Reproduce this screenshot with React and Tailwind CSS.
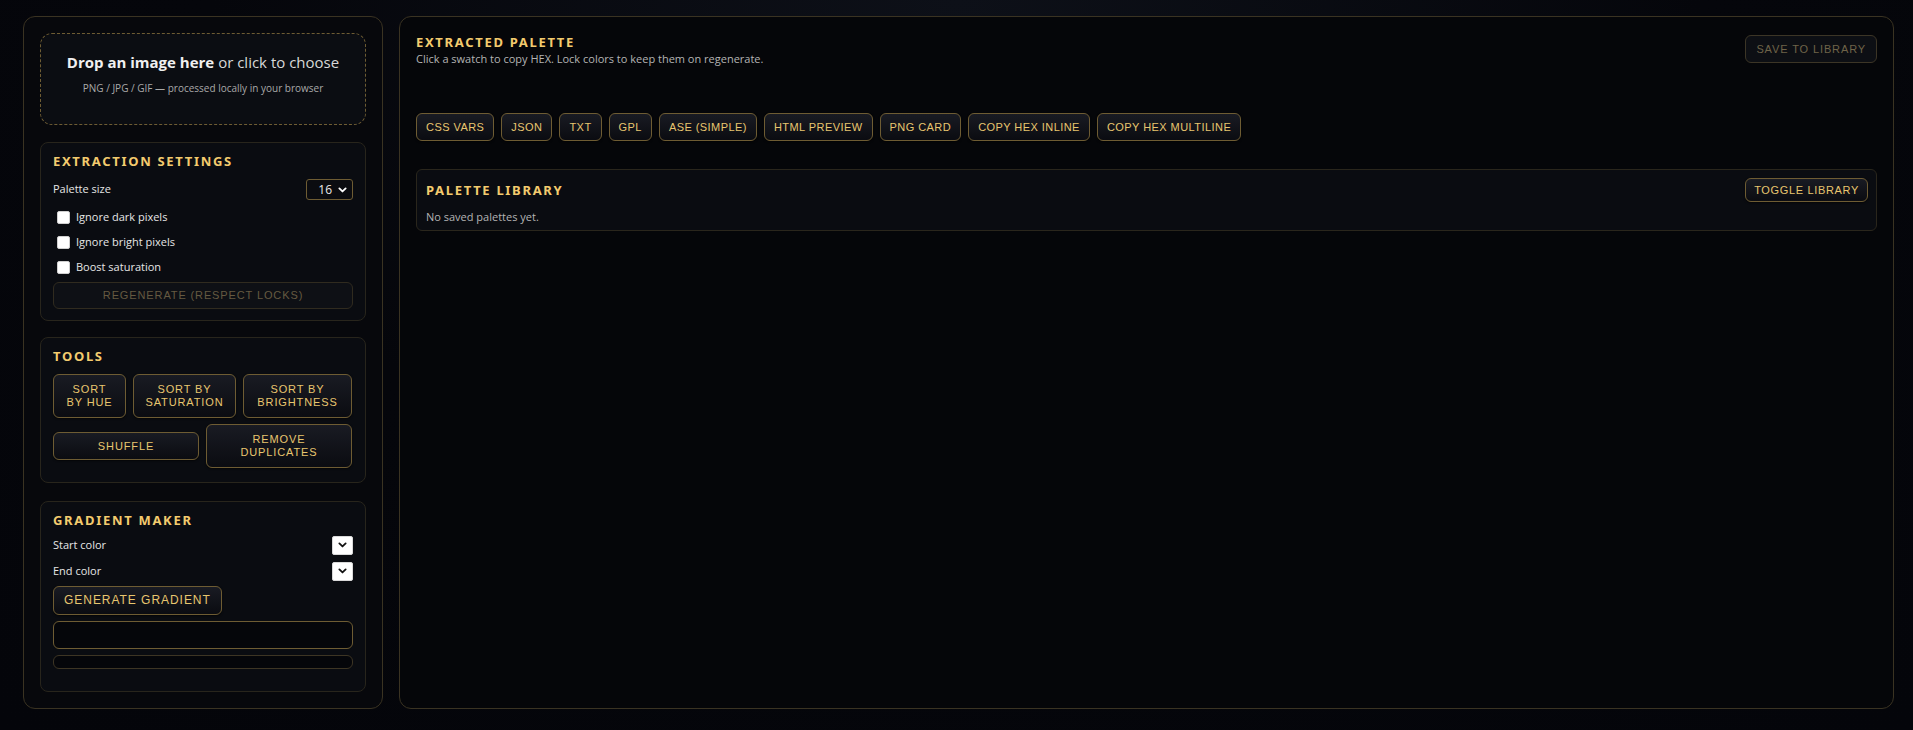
import React from 'react';

const btn =
  "rounded-md border border-[#6e5c33] bg-gradient-to-b from-[#191b23] to-[#0b0c11] text-[#e8c66f] font-['Liberation_Sans',Arial,sans-serif] text-[11px] uppercase leading-[13px] shadow-[0_1px_2px_rgba(0,0,0,0.6)]";

const Chevron = ({ className }) => (
  <svg viewBox="0 0 10 6" className={className} fill="none" stroke="currentColor" strokeWidth="2" strokeLinecap="round" strokeLinejoin="round">
    <path d="M1.5 1.2 5 4.6 8.5 1.2" />
  </svg>
);

const Check = ({ label }) => (
  <div className="flex items-center h-[25px] pl-1">
    <div className="w-[13px] h-[13px] rounded-[2px] bg-white border border-[#cfcfcf]" />
    <span className="ml-[6px] text-[11px] text-[#e6e6e6]">{label}</span>
  </div>
);

const Title = ({ children }) => (
  <h3 className="text-[13px] font-bold tracking-[0.13em] text-[#f3cb6e] leading-[18px] font-['Noto_Sans',sans-serif]">
    {children}
  </h3>
);

const ColorRow = ({ label }) => (
  <div className="flex items-center justify-between h-[26px]">
    <span className="text-[11px] text-[#e6e6e6]">{label}</span>
    <div className="w-[21px] h-[19px] bg-white border border-[#d9d9d9] rounded-[2px] flex items-center justify-center text-[#111]">
      <Chevron className="w-[9px] h-[6px]" />
    </div>
  </div>
);

const exportsList = ['CSS VARS', 'JSON', 'TXT', 'GPL', 'ASE (SIMPLE)', 'HTML PREVIEW', 'PNG CARD', 'COPY HEX INLINE', 'COPY HEX MULTILINE'];

export default function App() {
  return (
    <div className="min-h-screen w-full bg-[radial-gradient(ellipse_at_top,#0d1018_0%,#05060b_55%,#04050a_100%)] font-['Open_Sans','Noto_Sans',sans-serif] text-[#e6e6e6] flex gap-4 pt-4 pl-[23px] pr-[19px] pb-[21px]">
      {/* left column */}
      <aside className="w-[360px] h-[693px] shrink-0 rounded-xl border border-[#3a3322] bg-[#07080c] p-4 flex flex-col">
        <div className="h-[92px] rounded-xl border border-dashed border-[#6e5c33] bg-[#0b0d12] flex flex-col items-center pt-[18px]">
          <p className="text-[15px] leading-[20px] text-[#f0f0f0]">
            <span className="font-bold">Drop an image here</span>{' '}
            <span className="text-[#d8d8d8]">or click to choose</span>
          </p>
          <p className="text-[10px] leading-[14px] text-[#a9a9a9] mt-[9px]">PNG / JPG / GIF — processed locally in your browser</p>
        </div>

        <section className="mt-[17px] h-[179px] rounded-lg border border-[#28251c] bg-[#0a0c11] px-3 pt-[9px]">
          <Title>EXTRACTION SETTINGS</Title>
          <div className="flex items-center justify-between mt-[9px] h-[21px]">
            <span className="text-[11px] text-[#e6e6e6]">Palette size</span>
            <div className="w-[47px] h-[21px] rounded-[3px] border border-[#6e5c33] bg-[#0b0c10] flex items-center justify-end gap-[6px] pr-[5px] text-[12px] text-[#eaeaea]">
              <span>16</span>
              <Chevron className="w-[9px] h-[6px] text-white" />
            </div>
          </div>
          <div className="mt-[5px]">
            <Check label="Ignore dark pixels" />
            <Check label="Ignore bright pixels" />
            <Check label="Boost saturation" />
          </div>
          <button className="mt-[2px] w-full h-[27px] rounded-md border border-[#302b1f] bg-[#0e1015] text-[#655a41] font-['Liberation_Sans',Arial,sans-serif] text-[11px] tracking-[0.08em]">
            REGENERATE (RESPECT LOCKS)
          </button>
        </section>

        <section className="mt-4 h-[146px] rounded-lg border border-[#28251c] bg-[#0a0c11] px-3 pt-[9px]">
          <Title>TOOLS</Title>
          <div className="flex gap-[7px] mt-[9px]">
            <button className={`${btn} tracking-[0.08em] w-[73px] h-[44px]`}>SORT<br />BY HUE</button>
            <button className={`${btn} tracking-[0.08em] w-[103px] h-[44px]`}>SORT BY<br />SATURATION</button>
            <button className={`${btn} tracking-[0.08em] w-[109px] h-[44px]`}>SORT BY<br />BRIGHTNESS</button>
          </div>
          <div className="flex items-center gap-[7px] mt-[6px]">
            <button className={`${btn} tracking-[0.08em] w-[146px] h-[28px]`}>SHUFFLE</button>
            <button className={`${btn} tracking-[0.08em] w-[146px] h-[44px]`}>REMOVE<br />DUPLICATES</button>
          </div>
        </section>

        <section className="mt-[18px] h-[191px] rounded-lg border border-[#28251c] bg-[#0a0c11] px-3 pt-[9px]">
          <Title>GRADIENT MAKER</Title>
          <div className="mt-[3px]">
            <ColorRow label="Start color" />
            <ColorRow label="End color" />
          </div>
          <button className={`${btn} tracking-[0.08em] mt-[2px] h-[29px] px-[10px] text-[12px]`}>GENERATE GRADIENT</button>
          <div className="mt-[6px] h-[28px] rounded-md border border-[#6e5c33] bg-[#05060a]" />
          <div className="mt-[6px] h-[14px] rounded-md border border-[#3d3524] bg-[#05060a]" />
        </section>
      </aside>

      {/* main */}
      <main className="flex-1 h-[693px] rounded-xl border border-[#3a3322] bg-[#050609] p-4">
        <div className="flex items-start justify-between">
          <div>
            <h2 className="text-[13px] font-bold tracking-[0.13em] text-[#f3cb6e] leading-[18px] font-['Noto_Sans',sans-serif]">EXTRACTED PALETTE</h2>
            <p className="text-[11px] text-[#b4b4b4] leading-[14px] mt-[1px]">Click a swatch to copy HEX. Lock colors to keep them on regenerate.</p>
          </div>
          <button className="mt-[2px] h-[28px] px-[10px] rounded-md border border-[#3c3526] bg-[#0d0f14] text-[#6f6449] font-['Liberation_Sans',Arial,sans-serif] text-[11px] tracking-[0.08em]">
            SAVE TO LIBRARY
          </button>
        </div>

        {/* swatch grid (empty) */}
        <div className="h-[47px]" />

        <div className="flex flex-wrap gap-[7px]">
          {exportsList.map((t) => (
            <button key={t} className={`${btn} h-[28px] px-[9px] tracking-[0.04em]`}>{t}</button>
          ))}
        </div>

        <section className="mt-[28px] h-[62px] rounded-md border border-[#2a261c] bg-[#0a0c11] pl-[9px] pr-[8px] pt-[8px]">
          <div className="flex items-center justify-between h-[24px]">
            <Title>PALETTE LIBRARY</Title>
            <button className={`${btn} h-[24px] px-[8px] text-[10px] tracking-[0.06em]`}>TOGGLE LIBRARY</button>
          </div>
          <p className="mt-[8px] text-[11px] leading-[14px] text-[#b4b4b4]">No saved palettes yet.</p>
        </section>
      </main>
    </div>
  );
}
